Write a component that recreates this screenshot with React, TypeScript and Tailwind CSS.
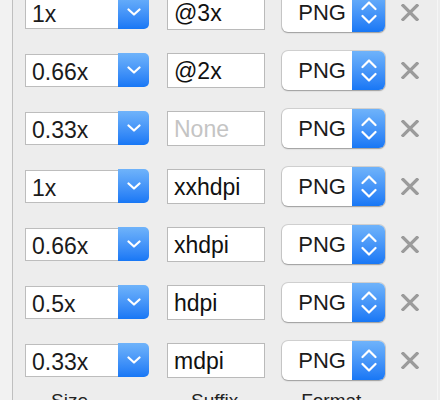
const rows = [
  { size: "1x", suffix: "@3x" },
  { size: "0.66x", suffix: "@2x" },
  { size: "0.33x", suffix: "" },
  { size: "1x", suffix: "xxhdpi" },
  { size: "0.66x", suffix: "xhdpi" },
  { size: "0.5x", suffix: "hdpi" },
  { size: "0.33x", suffix: "mdpi" },
];

function Chevron() {
  return (
    <svg width="14" height="8" viewBox="0 0 14 8" fill="none">
      <path d="M1.5 1.5 L7 6.5 L12.5 1.5" stroke="white" strokeWidth="2.2" strokeLinecap="round" strokeLinejoin="round" />
    </svg>
  );
}

function UpDown() {
  return (
    <svg width="16" height="23" viewBox="0 0 16 23" fill="none">
      <path d="M1.5 8 L8 1.5 L14.5 8" stroke="white" strokeWidth="2.2" strokeLinecap="round" strokeLinejoin="round" />
      <path d="M1.5 15 L8 21.5 L14.5 15" stroke="white" strokeWidth="2.2" strokeLinecap="round" strokeLinejoin="round" />
    </svg>
  );
}

function Remove() {
  return (
    <svg width="18" height="17" viewBox="0 0 18 17" fill="none">
      <path d="M2 1.5 L16 15.5 M16 1.5 L2 15.5" stroke="#9b9b9b" strokeWidth="3.2" strokeLinecap="square" />
    </svg>
  );
}

function Row({ size, suffix }: { size: string; suffix: string }) {
  return (
    <div className="flex h-[58px] items-center">
      {/* Size combo box */}
      <div className="flex h-[34px] w-[124px] items-stretch">
        <div className="flex w-[93px] items-center mt-px border border-r-0 border-[#bdbdbd] bg-white pl-[6px] pt-[3px] text-[23px] leading-none text-[#1b1b1b]">
          {size}
        </div>
        <div className="flex w-[31px] items-center justify-center rounded-r-[5px] bg-gradient-to-b from-[#6fb3fa] to-[#1777f5]">
          <Chevron />
        </div>
      </div>

      {/* Suffix field */}
      <div className="ml-[18px] flex h-[35px] w-[98px] items-center border border-[#bababa] bg-white pl-[6px] pt-[2px] text-[23px] leading-none">
        {suffix ? (
          <span className="text-[#111]">{suffix}</span>
        ) : (
          <span className="text-[#c4c4c4]">None</span>
        )}
      </div>

      {/* Format popup */}
      <div className="ml-[17px] flex h-[39px] w-[103px] items-stretch rounded-[6px] bg-white shadow-[0_0_0_1px_rgba(0,0,0,0.12),0_1px_1.5px_rgba(0,0,0,0.25)]">
        <div className="flex flex-1 items-center justify-end pr-[6px] pt-[1px] text-[22px] leading-none text-[#1b1b1b]">PNG</div>
        <div className="flex w-[33px] items-center justify-center rounded-r-[6px] bg-gradient-to-b from-[#6fb3fa] to-[#1777f5]">
          <UpDown />
        </div>
      </div>

      {/* Remove */}
      <div className="ml-[16px] flex items-center">
        <Remove />
      </div>
    </div>
  );
}

export default function App() {
  return (
    <div className="flex h-[400px] w-[440px] overflow-hidden bg-[#ededed]" style={{ fontFamily: '"Liberation Sans", Arial, sans-serif' }}>
      <div className="w-[12px] bg-[#f2f2f2]" />
      <div className="w-px bg-[#bfbfbf]" />
      <div className="flex-1 pl-[12px]">
        <div className="-mt-[17px]">
          {rows.map((r, i) => (
            <Row key={i} size={r.size} suffix={r.suffix} />
          ))}
        </div>
        <div className="flex pt-[1px] text-[19px] leading-[22px] text-[#222]">
          <span className="ml-[26px]">Size</span>
          <span className="ml-[103px]">Suffix</span>
          <span className="ml-[63px]">Format</span>
        </div>
      </div>
      <div className="w-px bg-[#f6f6f6]" />
      <div className="w-[2px] bg-[#ededed]" />
    </div>
  );
}
